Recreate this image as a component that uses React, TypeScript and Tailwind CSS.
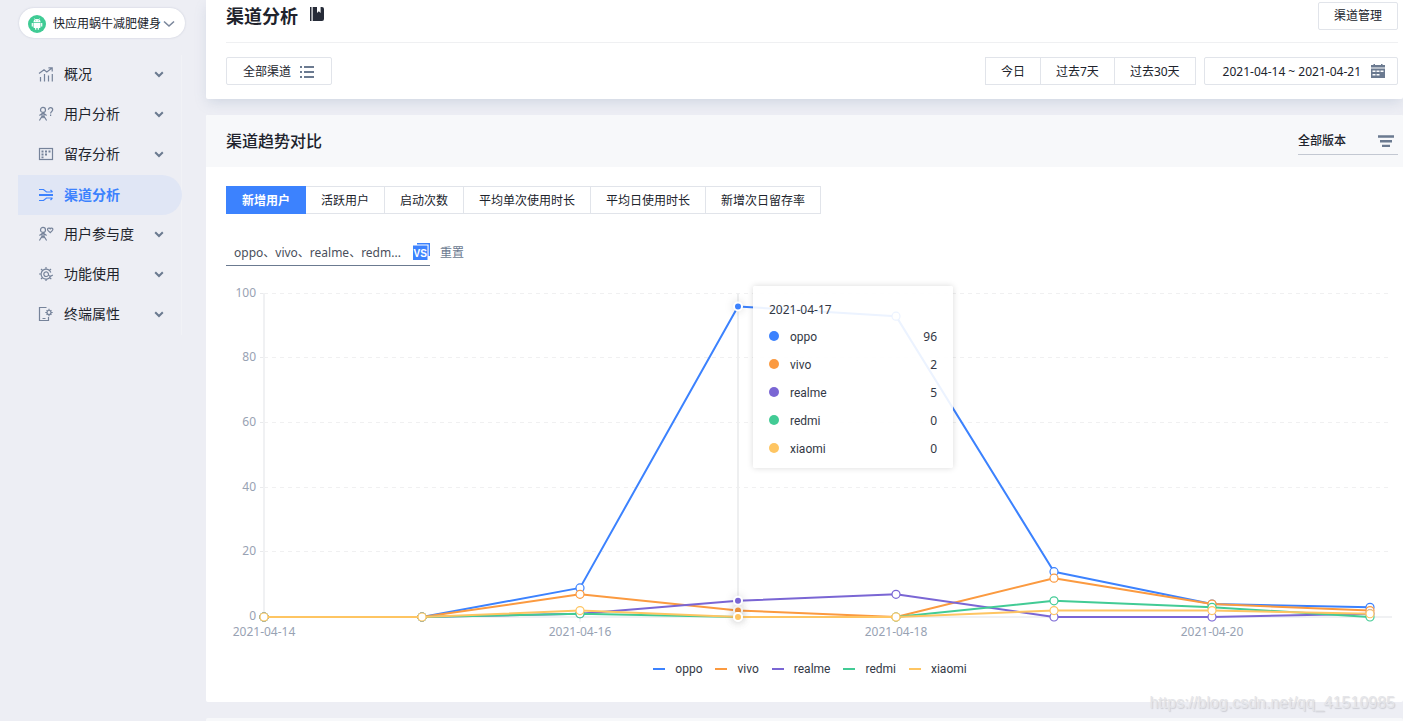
import { useLayoutEffect, useRef, useState, type ReactNode } from "react";

const FONT = "font-['Noto_Sans','Noto_Sans_CJK_SC',sans-serif]";

type Series = { name: string; color: string; values: number[] };

const DATES = [
  "2021-04-14",
  "2021-04-15",
  "2021-04-16",
  "2021-04-17",
  "2021-04-18",
  "2021-04-19",
  "2021-04-20",
  "2021-04-21",
];

const SERIES: Series[] = [
  { name: "oppo", color: "#3c82fe", values: [0, 0, 9, 96, 93, 14, 4, 3] },
  { name: "vivo", color: "#fb9a40", values: [0, 0, 7, 2, 0, 12, 4, 2] },
  { name: "realme", color: "#7a66d4", values: [0, 0, 1, 5, 7, 0, 0, 1] },
  { name: "redmi", color: "#42cb95", values: [0, 0, 1, 0, 0, 5, 3, 0] },
  { name: "xiaomi", color: "#fec562", values: [0, 0, 2, 0, 0, 2, 2, 1] },
];

const ACTIVE = 3;

function MenuIcon({ children }: { children: ReactNode }) {
  return (
    <svg
      viewBox="0 0 16 16"
      className="size-4 shrink-0"
      fill="none"
      stroke="currentColor"
      strokeWidth="1.2"
      aria-hidden="true"
    >
      {children}
    </svg>
  );
}

const person = (
  <>
    <circle cx="5" cy="3.9" r="2.5" />
    <path d="M1.400 9.600 4 7.600h2l2.600 2M4 7.600v2.600L1.400 14.500M6 7.600v2.600l2.600 4.300M3.600 12 5 10.400 6.400 12" />
  </>
);

const MENU: { label: string; icon: ReactNode; active?: boolean }[] = [
  {
    label: "概况",
    icon: (
      <MenuIcon>
        <path d="M1 7.500 6 3.700l2.800 2.300L14 2.100M10.400 1.800h3.800v3.800M2.500 11v4.500M6.500 8v7.500M10.500 9.500v6M14.300 8v7.500" />
      </MenuIcon>
    ),
  },
  {
    label: "用户分析",
    icon: (
      <MenuIcon>
        {person}
        <path d="M10.400 3.800c0-2.800 4.300-2.800 4.300 0 0 1.700-2.100 1.600-2.100 3.700M12.600 8.600v1.300" />
      </MenuIcon>
    ),
  },
  {
    label: "留存分析",
    icon: (
      <MenuIcon>
        <rect x="1.5" y="2.5" width="13" height="11" />
        <path d="M3.500 5.500h2M7 5.500h2M10.500 5.500h2M3.500 8.500h2M7 8.500h2M3.500 11.300h2" strokeWidth="1.8" />
      </MenuIcon>
    ),
  },
  {
    label: "渠道分析",
    active: true,
    icon: (
      <MenuIcon>
        <path d="M1 2.500h4.500L8.500 5H14.500M1 13.500h4.500l3-2.500H14.500M12.500 3l2 2M12.500 13l2-2" />
        <path d="M1 8h14" strokeWidth="2" />
      </MenuIcon>
    ),
  },
  {
    label: "用户参与度",
    icon: (
      <MenuIcon>
        {person}
        <path d="M12.200 6.600 9.900 4.300c-1.300-1.600 1.200-3.300 2.300-1.500 1.100-1.800 3.600-.1 2.300 1.500z" />
      </MenuIcon>
    ),
  },
  {
    label: "功能使用",
    icon: (
      <MenuIcon>
        <path d="M12.800 6.500A5 5 0 1 0 12.500 10.500M8 1v2M8 13v2M1 8h2M3 3l1.500 1.500M3 13l1.500-1.500M13 3l-1.500 1.500M10 9.500A2.300 2.300 0 1 1 10.300 7.500c0 2.500 1.700 3.500 4.500 1.500M12 12l1.300 1" />
      </MenuIcon>
    ),
  },
  {
    label: "终端属性",
    icon: (
      <MenuIcon>
        <path d="M8.500 1.500h-7v13h9V11M4.500 12.500h3" />
        <circle cx="11" cy="6.500" r="2" />
        <path d="M11 2.800v1.700M11 8.500v1.700M7.300 6.500H9M13 6.500h1.700M8.600 4.100l1 1M13.400 4.100l-1 1M8.600 8.900l1-1M13.400 8.900l-1-1" />
      </MenuIcon>
    ),
  },
];

function Sidebar() {
  return (
    <aside className="w-[206px] shrink-0 pt-2">
      <label className="relative ml-[19px] flex h-[30px] w-[166px] items-center rounded-full bg-white pt-px pl-[9px] shadow-[0_0_2px_rgba(120,130,160,0.35)]">
        <svg viewBox="0 0 18 18" className="size-[18px] shrink-0" aria-hidden="true">
          <circle cx="9" cy="9" r="9" fill="#3fcb94" />
          <path
            d="M5.500 7.700h7v4.500a.8.8 0 0 1-.8.8h-.8v1.800H9.700V13H8.300v1.800H7.100V13h-.8a.8.800 0 0 1-.8-.8zM5.500 7.100a3.500 3.200 0 0 1 7 0zM3.700 7.900h1.200v3.600H3.700zM13.100 7.900h1.200v3.600h-1.200z"
            fill="#fff"
          />
          <path d="M6.300 3.300l1 1.500M11.700 3.300l-1 1.500" stroke="#fff" strokeWidth=".6" />
          <path d="M7.300 5.700h.8M9.900 5.700h.8" stroke="#3fcb94" strokeWidth=".7" />
        </svg>
        <select
          aria-label="应用"
          className="ml-[7px] h-full flex-1 appearance-none bg-transparent text-xs text-[#20232c] outline-none"
        >
          <option>快应用蜗牛减肥健身</option>
        </select>
        <svg
          viewBox="0 0 12 8"
          className="pointer-events-none absolute right-2.5 h-2 w-3"
          fill="none"
          stroke="#7b879c"
          strokeWidth="1.6"
          aria-hidden="true"
        >
          <path d="M1 1.500l5 4.500 5-4.500" />
        </svg>
      </label>
      <nav className="mt-[17px] ml-[18px] w-[164px] border-r border-[#f1f2f6]">
        <ul className="-mr-px">
          {MENU.map((item) => (
            <li key={item.label}>
              <a
                href="#"
                aria-current={item.active ? "page" : undefined}
                className={
                  item.active
                    ? "flex h-10 items-center gap-2.5 rounded-r-full bg-[#e0e6f5] pl-5 text-sm font-bold text-[#3c82fe]"
                    : "flex h-10 items-center gap-2.5 pb-0.5 pl-5 text-sm text-[#20232c]"
                }
              >
                <span className={item.active ? "" : "text-[#76839a]"}>{item.icon}</span>
                {item.label}
                {!item.active && (
                  <svg
                    viewBox="0 0 10 7"
                    className="mr-[18px] ml-auto h-[7px] w-2.5"
                    fill="none"
                    stroke="#6b7a90"
                    strokeWidth="2"
                    aria-hidden="true"
                  >
                    <path d="M1.200 1.200 5 5l3.800-3.800" />
                  </svg>
                )}
              </a>
            </li>
          ))}
        </ul>
      </nav>
    </aside>
  );
}

function Segmented({ items, active }: { items: string[]; active?: number }) {
  return (
    <div className="flex">
      {items.map((label, i) => (
        <button
          key={label}
          type="button"
          className={
            (i > 0 ? "-ml-px " : "") +
            (i === active
              ? "relative h-7 border border-[#3c82fe] bg-[#3c82fe] px-[15px] pt-0.5 text-xs font-bold text-white"
              : "h-7 border border-[#e1e4ea] bg-white px-[15px] pt-0.5 text-xs text-[#20232c]")
          }
        >
          {label}
        </button>
      ))}
    </div>
  );
}

function PageHeader() {
  return (
    <header className="rounded-b-xs bg-white pt-0.5 pr-[5px] pb-3.5 pl-5 shadow-[0_5px_12px_-2px_rgba(130,150,180,0.28)]">
      <div className="box-content flex h-10 items-start border-b border-[#eff0f2]">
        <h1 className="text-lg leading-7 font-bold text-[#20232c]">渠道分析</h1>
        <svg viewBox="0 0 14 14" className="mt-[5px] ml-3 size-3.5" fill="#262b38" aria-hidden="true">
          <path d="M0 0h1.500v14H0zM2.700 0H7v6l1.800-1.700L10.600 6V0H12a2 2 0 0 1 2 2v10a2 2 0 0 1-2 2H2.700z" />
        </svg>
        <button
          type="button"
          className="ml-auto h-7 rounded-xs border border-[#e1e4ea] px-[15px] text-xs text-[#20232c]"
        >
          渠道管理
        </button>
      </div>
      <div className="mt-3.5 flex items-center">
        <button
          type="button"
          className="flex h-7 items-center gap-2 rounded-xs border border-[#e1e4ea] px-4 pt-0.5 text-xs text-[#20232c]"
        >
          全部渠道
          <svg viewBox="0 0 16 12" className="h-3 w-4" stroke="#6b7a90" strokeWidth="2" aria-hidden="true">
            <path d="M1 1h2M5 1h10M1 6h2M5 6h10M1 11h2M5 11h10" />
          </svg>
        </button>
        <div className="ml-auto flex gap-2">
          <Segmented items={["今日", "过去7天", "过去30天"]} />
          <button
            type="button"
            className="flex h-7 items-center gap-2.5 rounded-xs border border-[#e1e4ea] pr-3 pl-[18px] text-xs text-[#20232c]"
          >
            <span className="pt-0.5">2021-04-14 ~ 2021-04-21</span>
            <svg viewBox="0 0 14 14" className="size-3.5" aria-hidden="true">
              <path d="M0 1h14v2.500H0zM2.500 0h1.500v2H2.500zM10 0h1.500v2H10z" fill="#6b7a90" />
              <path d="M0 4.500h14V14H0z" fill="#6b7a90" />
              <path d="M1.500 6.500h3V8h-3zM5.500 6.500h3V8h-3zM9.500 6.500h3V8h-3zM1.500 10h3v1.500h-3zM5.500 10h3v1.500h-3z" fill="#fff" />
            </svg>
          </button>
        </div>
      </div>
    </header>
  );
}

function TrendChart() {
  const box = useRef<HTMLDivElement>(null);
  const [width, setWidth] = useState(1172);

  useLayoutEffect(() => {
    const el = box.current;
    if (!el) return;
    const update = () => setWidth(el.clientWidth);
    update();
    const observer = new ResizeObserver(update);
    observer.observe(el);
    return () => observer.disconnect();
  }, []);

  const left = 38;
  const axisEnd = width - 6;
  const step = (width - 28 - left) / (DATES.length - 1);
  const x = (i: number) => left + step * i;
  const y = (v: number) => 351 - v * 3.235;

  return (
    <div ref={box} className="relative h-[390px]">
      <svg width={width} height={390} className="block" role="img" aria-label="新增用户趋势">
        <g className="text-xs" fill="#98a2b3">
          {[0, 20, 40, 60, 80, 100].map((v) => (
            <g key={v}>
              <text x={30} y={Math.round(y(v)) + 3} textAnchor="end">
                {v}
              </text>
              <path d={`M${left - 4} ${Math.round(y(v)) - 0.5}h4`} stroke="#e9eaec" />
              {v > 0 && (
                <path
                  d={`M${left} ${Math.round(y(v)) - 0.5}H${axisEnd}`}
                  stroke="#f0f0f1"
                  strokeDasharray="4 4"
                />
              )}
            </g>
          ))}
          {DATES.map((d, i) =>
            i % 2 === 0 ? (
              <g key={d}>
                <path d={`M${x(i)} 351v5`} stroke="#e9eaec" />
                <text x={x(i)} y={370} textAnchor="middle">
                  {d}
                </text>
              </g>
            ) : null,
          )}
        </g>
        <path d={`M${left} 27V351H${axisEnd}`} fill="none" stroke="#f0f1f3" strokeWidth="2" />
        <path d={`M${x(ACTIVE)} 27V351`} stroke="#eeeff0" strokeWidth="2" />
        {SERIES.map((s) => (
          <g key={s.name}>
            <polyline
              points={s.values.map((v, i) => `${x(i)},${y(v)}`).join(" ")}
              fill="none"
              stroke={s.color}
              strokeWidth="2"
              strokeLinejoin="bevel"
            />
            {s.values.map((v, i) =>
              i === ACTIVE ? (
                <circle
                  key={i}
                  cx={x(i)}
                  cy={y(v)}
                  r="4"
                  fill={s.color}
                  stroke="#fff"
                  strokeWidth="2"
                  className="drop-shadow-[0_0_4px_rgba(0,0,0,0.15)]"
                />
              ) : (
                <circle key={i} cx={x(i)} cy={y(v)} r="4" fill="#fff" stroke={s.color} strokeWidth="1.2" />
              ),
            )}
          </g>
        ))}
      </svg>
      <div
        className="absolute top-5 w-[200px] rounded-xs bg-white/90 px-4 pt-3.5 pb-1.5 text-xs text-[#333845] shadow-[0_0_6px_rgba(0,0,0,0.15)]"
        style={{ left: x(ACTIVE) + 15 }}
      >
        <p className="h-[22px] leading-5">{DATES[ACTIVE]}</p>
        <ul>
          {SERIES.map((s) => (
            <li key={s.name} className="flex h-7 items-center">
              <span className="mr-[11px] size-2.5 rounded-full" style={{ backgroundColor: s.color }} />
              <span className="pt-0.5 font-['Roboto',sans-serif]">{s.name}</span>
              <span className="ml-auto pt-0.5">{s.values[ACTIVE]}</span>
            </li>
          ))}
        </ul>
      </div>
    </div>
  );
}

function TrendCard() {
  return (
    <section className="mt-4 rounded-xs bg-white">
      <div className="flex h-[52px] items-center rounded-t-xs bg-[#f7f8fa] pr-[5px] pl-5">
        <h2 className="text-base font-medium text-[#20232c]">渠道趋势对比</h2>
        <label className="relative ml-auto flex h-7 w-[100px] items-center border-b border-[#c3c8d2]">
          <select
            aria-label="版本"
            className="h-full w-full appearance-none bg-transparent text-xs font-medium text-[#20232c] outline-none"
          >
            <option>全部版本</option>
          </select>
          <svg
            viewBox="0 0 16 12"
            className="pointer-events-none absolute right-1 h-3 w-4"
            stroke="#6b7a90"
            strokeWidth="2.4"
            aria-hidden="true"
          >
            <path d="M0 1.500h16M2 6.300h12M4 11h8" />
          </svg>
        </label>
      </div>
      <div className="pt-[19px] pr-[5px] pb-5 pl-5">
        <Segmented
          active={0}
          items={["新增用户", "活跃用户", "启动次数", "平均单次使用时长", "平均日使用时长", "新增次日留存率"]}
        />
        <div className="mt-7 flex h-6 items-center">
          <button
            type="button"
            className="flex h-6 w-[204px] items-center justify-between border-b border-[#6b7a90] pb-1 pl-2 text-xs whitespace-nowrap text-[#4a4f5c]"
          >
            <span className="pt-0.5">oppo、vivo、realme、redm...</span>
            <svg viewBox="0 0 17 17" className="size-[17px] shrink-0" aria-hidden="true">
              <path d="M4 .7h12.300V13" fill="none" stroke="#3c82fe" strokeWidth="1.4" />
              <rect y="2.500" width="14.500" height="14.500" fill="#3c82fe" />
              <text
                x="7.200"
                y="13.500"
                textAnchor="middle"
                className="font-['Liberation_Sans_Narrow','Liberation_Sans',sans-serif] text-[10px] font-bold"
                fill="#fff"
              >
                VS
              </text>
            </svg>
          </button>
          <button type="button" className="ml-2.5 pb-0.5 text-xs text-[#6b7a90]">
            重置
          </button>
        </div>
        <TrendChart />
        <ul className="flex h-[26px] items-center justify-center gap-[13px] pr-1 font-['Roboto',sans-serif] text-xs text-[#333845]">
          {SERIES.map((s) => (
            <li key={s.name} className="flex items-center gap-2.5">
              <span className="h-0.5 w-3" style={{ backgroundColor: s.color }} />
              {s.name}
            </li>
          ))}
        </ul>
      </div>
    </section>
  );
}

export default function App() {
  return (
    <div className={`relative flex min-h-screen bg-[#edeef4] ${FONT}`}>
      <Sidebar />
      <main className="flex min-w-0 flex-1 flex-col">
        <PageHeader />
        <TrendCard />
        <section className="mt-4 flex-1 rounded-t-xs bg-[#f7f8fa]" />
      </main>
      <p className="pointer-events-none absolute right-2 bottom-1.5 font-['Liberation_Sans',sans-serif] text-base text-[#e4e5e9] [text-shadow:1px_1px_1px_rgba(130,130,140,0.3)]">
        https://blog.csdn.net/qq_41510985
      </p>
    </div>
  );
}
